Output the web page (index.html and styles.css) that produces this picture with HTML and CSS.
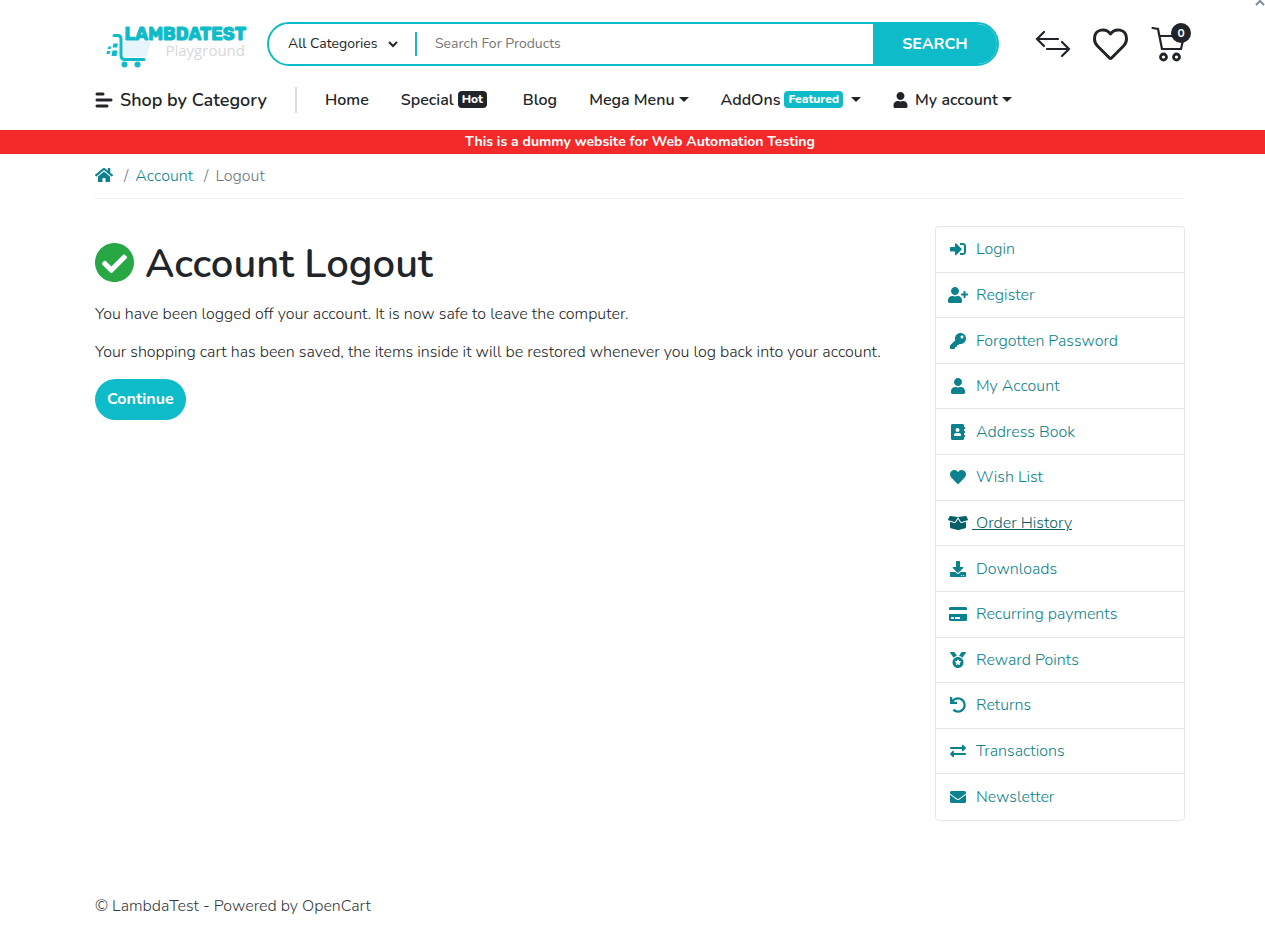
FILE: index.html
```html
<!DOCTYPE html>
<html lang="en">
<head>
<meta charset="utf-8">
<meta name="viewport" content="width=device-width, initial-scale=1">
<title>Account Logout</title>
<link rel="stylesheet" href="styles.css">
</head>
<body>
<button class="dismiss" type="button" aria-label="Close"><svg viewBox="0 0 12 12" fill="none" stroke="currentColor" stroke-width="2"><path d="M2 10L6 6L10 10"/></svg></button>
<header class="container">
  <div class="top">
    <a class="logo" href="#" aria-label="LambdaTest Playground">
      <svg viewBox="0 0 142 48">
        <path d="M19 21H43Q45 21 44.500 23L41 35Q40.500 37 38 37H17V21Z" fill="#e6f4fc"/>
        <path d="M8 15.500H12Q15 15.500 15 19V35Q15 39.500 19 39.500H38" fill="none" stroke="#0ebbc8" stroke-width="3" stroke-linecap="round"/>
        <g fill="#0ebbc8"><circle cx="18.500" cy="44.500" r="3"/><circle cx="31.500" cy="44.500" r="3"/>
        <path d="M7.500 23.500h4.500l-1 4h-4.500zM2.500 26.500h3l-1 2.500h-3zM1 31h3.500l-1 3h-3zM6.500 30.500h5l-1 5.500h-5z"/></g>
        <text class="logo-name" x="140" y="20" text-anchor="end">LAMBDATEST</text>
        <text class="logo-sub" x="139" y="36" text-anchor="end">Playground</text>
      </svg>
    </a>
    <form class="search">
      <select class="category" aria-label="Category"><option>All Categories</option></select>
      <svg class="chevron" viewBox="0 0 10 8" fill="none" stroke="currentColor" stroke-width="2"><path d="M1 2L5 6L9 2"/></svg>
      <input class="query" type="text" placeholder="Search For Products" aria-label="Search For Products">
      <button class="submit" type="submit">SEARCH</button>
    </form>
    <div class="tools">
      <a href="#" aria-label="Compare"><svg class="tool-icon" viewBox="0 0 36 36" fill="none" stroke="currentColor" stroke-width="2.200" stroke-linecap="round"><path d="M2 13H23M9 6L2 13L9 20M12 23H34M27 16L34 23L27 30"/></svg></a>
      <a href="#" aria-label="Wish list"><svg class="tool-icon" viewBox="0 0 36 36" fill="none" stroke="currentColor" stroke-width="3" stroke-linejoin="round"><path d="M17.500 8C13.500 2 1.500 2 1.500 13C1.500 16 2.500 18 4.500 20L16.500 32Q17.500 33 18.500 32L30.500 20C32.500 18 33.500 16 33.500 13C33.500 2 21.500 2 17.500 8Z"/></svg></a>
      <a class="cart" href="#" aria-label="Cart"><svg class="tool-icon" viewBox="0 0 36 36" fill="none" stroke="currentColor" stroke-width="2.200" stroke-linecap="round"><path d="M1.500 2L7 3L11 23H30L33 10H9"/><g stroke-width="2.800"><circle cx="12.500" cy="31" r="3"/><circle cx="25.500" cy="31" r="3"/></g></svg><span class="count">0</span></a>
    </div>
  </div>
  <nav class="menu">
    <a class="shop" href="#"><svg class="bars" viewBox="0 0 18 18" stroke="currentColor" stroke-width="3" stroke-linecap="round"><path d="M2 3H8M2 9H16M2 15H12"/></svg>Shop by Category</a>
    <a href="#">Home</a>
    <a href="#">Special<span class="badge dark">Hot</span></a>
    <a href="#">Blog</a>
    <a href="#">Mega Menu<i class="caret"></i></a>
    <a href="#">AddOns<span class="badge">Featured</span><i class="caret"></i></a>
    <a href="#"><svg class="person" viewBox="0 0 448 512" fill="currentColor"><path d="M224 256c70.7 0 128-57.3 128-128S294.7 0 224 0 96 57.3 96 128s57.3 128 128 128zm89.6 32h-16.7c-22.2 10.2-46.9 16-72.9 16s-50.6-5.8-72.9-16h-16.7C60.2 288 0 348.2 0 422.4V464c0 26.5 21.5 48 48 48h352c26.5 0 48-21.5 48-48v-41.6c0-74.2-60.2-134.4-134.4-134.4z"/></svg>My account<i class="caret"></i></a>
  </nav>
</header>
<p class="notice">This is a dummy website for Web Automation Testing</p>
<main class="container">
  <ol class="crumbs">
    <li><a href="#" aria-label="Home"><svg class="home" viewBox="0 0 576 512" fill="currentColor"><path d="M280.37 148.26L96 300.11V464a16 16 0 0 0 16 16l112.06-.29a16 16 0 0 0 15.92-16V368a16 16 0 0 1 16-16h64a16 16 0 0 1 16 16v95.64a16 16 0 0 0 16 16.05L464 480a16 16 0 0 0 16-16V300L295.67 148.26a12.19 12.19 0 0 0-15.3 0zM571.6 251.47L488 182.56V44.05a12 12 0 0 0-12-12h-56a12 12 0 0 0-12 12v72.61L318.47 43a48 48 0 0 0-61 0L4.34 251.47a12 12 0 0 0-1.6 16.9l25.5 31A12 12 0 0 0 45.15 301l235.22-193.74a12.19 12.19 0 0 1 15.3 0L530.9 301a12 12 0 0 0 16.9-1.6l25.5-31a12 12 0 0 0-1.7-16.93z"/></svg></a></li>
    <li><a href="#">Account</a></li>
    <li>Logout</li>
  </ol>
  <div class="columns">
    <section class="content">
      <h1><svg class="check" viewBox="8 8 496 496" fill="currentColor"><path d="M504 256c0 136.967-111.033 248-248 248S8 392.967 8 256 119.033 8 256 8s248 111.033 248 248zM227.314 387.314l184-184c6.248-6.248 6.248-16.379 0-22.627l-22.627-22.627c-6.248-6.249-16.379-6.249-22.628 0L216 308.118l-70.059-70.059c-6.248-6.248-16.379-6.248-22.628 0l-22.627 22.627c-6.248 6.248-6.248 16.379 0 22.627l104 104c6.249 6.249 16.379 6.249 22.628.001z"/></svg>Account Logout</h1>
      <p>You have been logged off your account. It is now safe to leave the computer.</p>
      <p>Your shopping cart has been saved, the items inside it will be restored whenever you log back into your account.</p>
      <a class="continue" href="#">Continue</a>
    </section>
    <aside class="list">
      <a href="#"><svg viewBox="0 0 512 512"><path d="M416 448h-84c-6.6 0-12-5.4-12-12v-40c0-6.6 5.4-12 12-12h84c17.7 0 32-14.3 32-32V160c0-17.700-14.300-32-32-32h-84c-6.600 0-12-5.400-12-12V76c0-6.600 5.400-12 12-12h84c53 0 96 43 96 96v192c0 53-43 96-96 96zm-47-201L201 79c-15-15-41-4.500-41 17v96H24c-13.300 0-24 10.700-24 24v96c0 13.300 10.700 24 24 24h136v96c0 21.500 26 32 41 17l168-168c9.300-9.400 9.300-24.600 0-34z"/></svg><span>Login</span></a>
      <a href="#"><svg viewBox="0 0 640 512"><path d="M624 208h-64v-64c0-8.800-7.200-16-16-16h-32c-8.800 0-16 7.200-16 16v64h-64c-8.800 0-16 7.200-16 16v32c0 8.800 7.200 16 16 16h64v64c0 8.800 7.200 16 16 16h32c8.800 0 16-7.200 16-16v-64h64c8.800 0 16-7.200 16-16v-32c0-8.800-7.200-16-16-16zM224 256c70.700 0 128-57.300 128-128S294.700 0 224 0 96 57.300 96 128s57.300 128 128 128zm89.600 32h-16.700c-22.200 10.200-46.900 16-72.900 16s-50.600-5.800-72.900-16h-16.700C60.200 288 0 348.200 0 422.400V464c0 26.500 21.500 48 48 48h352c26.500 0 48-21.500 48-48v-41.600c0-74.200-60.200-134.400-134.400-134.400z"/></svg><span>Register</span></a>
      <a href="#"><svg viewBox="0 0 512 512"><path d="M512 176.001C512 273.203 433.202 352 336 352c-11.220 0-22.190-1.062-32.827-3.069l-24.012 27.014A23.999 23.999 0 0 1 261.223 384H224v40c0 13.255-10.745 24-24 24h-40v40c0 13.255-10.745 24-24 24H24c-13.255 0-24-10.745-24-24v-78.059c0-6.365 2.529-12.470 7.029-16.971l161.802-161.802C163.108 213.814 160 195.271 160 176 160 78.798 238.797.001 335.999 0 433.488-.001 512 78.511 512 176.001zM336 128c0 26.510 21.490 48 48 48s48-21.490 48-48-21.490-48-48-48-48 21.490-48 48z"/></svg><span>Forgotten Password</span></a>
      <a href="#"><svg viewBox="0 0 448 512"><path d="M224 256c70.700 0 128-57.300 128-128S294.700 0 224 0 96 57.300 96 128s57.300 128 128 128zm89.600 32h-16.700c-22.200 10.200-46.900 16-72.900 16s-50.600-5.800-72.900-16h-16.700C60.200 288 0 348.200 0 422.400V464c0 26.500 21.500 48 48 48h352c26.500 0 48-21.500 48-48v-41.600c0-74.200-60.200-134.400-134.400-134.400z"/></svg><span>My Account</span></a>
      <a href="#"><svg viewBox="0 0 448 512"><path d="M436 160c6.600 0 12-5.400 12-12v-40c0-6.600-5.400-12-12-12h-20V48c0-26.500-21.500-48-48-48H48C21.500 0 0 21.500 0 48v416c0 26.500 21.500 48 48 48h320c26.500 0 48-21.500 48-48v-48h20c6.600 0 12-5.400 12-12v-40c0-6.600-5.400-12-12-12h-20v-64h20c6.600 0 12-5.400 12-12v-40c0-6.600-5.400-12-12-12h-20v-64h20zm-228-32c35.300 0 64 28.700 64 64s-28.700 64-64 64-64-28.700-64-64 28.700-64 64-64zm112 236.800c0 10.600-10 19.200-22.400 19.200H118.400C106 384 96 375.400 96 364.800v-19.200c0-31.800 30.100-57.600 67.200-57.600h5c12.300 5.100 25.700 8 39.800 8s27.600-2.900 39.800-8h5c37.100 0 67.200 25.800 67.200 57.600v19.200z"/></svg><span>Address Book</span></a>
      <a href="#"><svg viewBox="0 0 512 512"><path d="M462.300 62.600C407.500 15.900 326 24.300 275.700 76.200L256 96.500l-19.700-20.300C186.100 24.300 104.500 15.900 49.700 62.600c-62.800 53.600-66.100 149.800-9.900 207.900l193.500 199.800c12.500 12.900 32.800 12.900 45.300 0l193.500-199.800c56.300-58.100 53-154.300-9.800-207.900z"/></svg><span>Wish List</span></a>
      <a class="active" href="#"><svg viewBox="0 0 640 512"><path d="M425.700 256c-16.900 0-32.800-9-41.400-23.400L320 126l-64.200 106.600c-8.700 14.500-24.600 23.500-41.500 23.500-4.500 0-9-.6-13.300-1.900L64 215v178c0 14.700 10 27.500 24.200 31l216.200 54.100c10.200 2.500 20.900 2.500 31 0L551.800 424c14.200-3.600 24.200-16.400 24.200-31V215l-137 39.100c-4.300 1.300-8.800 1.900-13.300 1.900zm212.600-112.200L586.800 41c-3.100-6.200-9.800-9.800-16.700-8.900L320 64l91.700 152.100c3.800 6.300 11.400 9.300 18.500 7.300l197.900-56.500c9.900-2.900 14.700-13.900 10.200-23.100zM53.200 41L1.700 143.800c-4.600 9.200.3 20.200 10.100 23l197.900 56.500c7.100 2 14.700-1 18.500-7.300L320 64 69.800 32.100c-6.900-.8-13.500 2.700-16.600 8.900z"/></svg><span>&nbsp;Order History</span></a>
      <a href="#"><svg viewBox="0 0 512 512"><path d="M216 0h80c13.300 0 24 10.700 24 24v168h87.700c17.800 0 26.700 21.500 14.100 34.100L269.700 378.300c-7.500 7.500-19.800 7.500-27.300 0L90.100 226.100c-12.600-12.600-3.700-34.100 14.100-34.100H192V24c0-13.300 10.700-24 24-24zm296 376v112c0 13.300-10.700 24-24 24H24c-13.300 0-24-10.700-24-24V376c0-13.300 10.700-24 24-24h146.700l49 49c20.100 20.100 52.500 20.100 72.600 0l49-49H488c13.300 0 24 10.700 24 24zm-124 88c0-11-9-20-20-20s-20 9-20 20 9 20 20 20 20-9 20-20zm64 0c0-11-9-20-20-20s-20 9-20 20 9 20 20 20 20-9 20-20z"/></svg><span>Downloads</span></a>
      <a href="#"><svg viewBox="0 0 576 512"><path d="M0 432c0 26.500 21.500 48 48 48h480c26.500 0 48-21.500 48-48V256H0v176zm192-68c0-6.600 5.400-12 12-12h136c6.600 0 12 5.400 12 12v40c0 6.600-5.400 12-12 12H204c-6.600 0-12-5.400-12-12v-40zm-128 0c0-6.600 5.400-12 12-12h72c6.600 0 12 5.400 12 12v40c0 6.600-5.400 12-12 12H76c-6.600 0-12-5.400-12-12v-40zM576 80v48H0V80c0-26.500 21.500-48 48-48h480c26.500 0 48 21.500 48 48z"/></svg><span>Recurring payments</span></a>
      <a href="#"><svg viewBox="0 0 512 512"><path d="M223.750 130.750L154.620 15.540A31.997 31.997 0 0 0 127.180 0H16.030C3.080 0-4.500 14.570 2.920 25.180l111.270 158.960c29.720-27.770 67.520-46.830 109.560-53.390zM495.970 0H384.820c-11.240 0-21.660 5.900-27.440 15.540l-69.130 115.210c42.040 6.560 79.840 25.620 109.560 53.380L509.080 25.180C516.500 14.570 508.920 0 495.970 0zM256 160c-97.200 0-176 78.800-176 176s78.800 176 176 176 176-78.800 176-176-78.800-176-176-176zm92.520 157.260l-37.930 36.960 8.970 52.220c1.600 9.360-8.260 16.510-16.650 12.090L256 393.880l-46.900 24.650c-8.400 4.450-18.250-2.740-16.650-12.090l8.970-52.220-37.930-36.960c-6.820-6.640-3.050-18.230 6.350-19.590l52.430-7.640 23.430-47.520c2.110-4.280 6.190-6.390 10.280-6.390 4.110 0 8.220 2.140 10.330 6.390l23.430 47.520 52.430 7.640c9.400 1.360 13.170 12.950 6.350 19.590z"/></svg><span>Reward Points</span></a>
      <a href="#"><svg viewBox="0 0 512 512"><path d="M212.333 224.333H12c-6.627 0-12-5.373-12-12V12C0 5.373 5.373 0 12 0h48c6.627 0 12 5.373 12 12v78.112C117.773 39.279 184.260 7.470 258.175 8.007c136.906.994 246.448 111.623 246.157 248.532C504.041 393.258 393.120 504 256.333 504c-64.089 0-122.496-24.313-166.510-64.215-5.099-4.622-5.334-12.554-.467-17.420l33.967-33.967c4.474-4.474 11.662-4.717 16.401-.525C170.760 415.336 211.580 432 256.333 432c97.268 0 176-78.716 176-176 0-97.267-78.716-176-176-176-58.496 0-110.280 28.476-142.274 72.333h98.274c6.627 0 12 5.373 12 12v48c0 6.627-5.373 12-12 12z"/></svg><span>Returns</span></a>
      <a href="#"><svg viewBox="0 0 512 512"><path d="M0 168v-16c0-13.255 10.745-24 24-24h360V80c0-21.367 25.899-32.042 40.971-16.971l80 80c9.372 9.373 9.372 24.569 0 33.941l-80 80C409.956 271.982 384 261.456 384 240v-48H24c-13.255 0-24-10.745-24-24zm488 152H128v-48c0-21.314-25.862-32.080-40.971-16.971l-80 80c-9.372 9.373-9.372 24.569 0 33.941l80 80C102.057 463.997 128 453.437 128 432v-48h360c13.255 0 24-10.745 24-24v-16c0-13.255-10.745-24-24-24z"/></svg><span>Transactions</span></a>
      <a href="#"><svg viewBox="0 0 512 512"><path d="M502.300 190.800c3.900-3.100 9.700-.2 9.700 4.700V400c0 26.500-21.500 48-48 48H48c-26.500 0-48-21.500-48-48V195.600c0-5 5.700-7.800 9.700-4.700 22.400 17.400 52.100 39.500 154.100 113.600 21.100 15.400 56.700 47.800 92.200 47.600 35.700.3 72-32.800 92.300-47.600 102-74.100 131.600-96.300 154-113.700zM256 320c23.200.4 56.600-29.200 73.400-41.400 132.700-96.300 142.800-104.700 173.400-128.700 5.800-4.500 9.200-11.500 9.200-18.900v-19c0-26.500-21.500-48-48-48H48c-26.500 0-48 21.500-48 48v19c0 7.400 3.400 14.300 9.200 18.900 30.600 23.900 40.700 32.400 173.400 128.700 16.800 12.200 50.200 41.800 73.400 41.400z"/></svg><span>Newsletter</span></a>
    </aside>
  </div>
</main>
<footer class="container">© LambdaTest - Powered by OpenCart</footer>
</body>
</html>
```
FILE: styles.css
```css
* { box-sizing: border-box; }
body {
  margin: 0;
  font: 300 16px/24px Nunito, "Open Sans", sans-serif;
  color: #212529;
  background: #fff;
}
a { color: #0b828d; text-decoration: none; }
svg { display: block; flex: none; }
p { margin: 0; }
.container { padding: 0 80px 0 95px; }

.dismiss {
  position: absolute;
  top: -5px;
  right: -1px;
  width: 12px;
  height: 12px;
  padding: 0;
  border: 0;
  background: none;
  color: #7b8a94;
}

.top { display: flex; align-items: center; padding-top: 20px; }
.logo { margin: 0 19px 0 11px; }
.logo svg { width: 142px; height: 48px; overflow: visible; }
.logo-name { font: 700 18px Rubik, Roboto, sans-serif; fill: #0ebbc8; stroke: #0ebbc8; stroke-width: 1px; }
.logo-sub { font: 400 15px "Open Sans", sans-serif; fill: #d8d8d8; }

.search {
  display: flex;
  align-items: center;
  flex: 1;
  height: 44px;
  overflow: hidden;
  border: 2px solid #0ebbc8;
  border-radius: 22px;
}
.category {
  appearance: none;
  width: 148px;
  height: 24px;
  padding: 0 0 0 19px;
  border: 0;
  border-right: 2px solid #0ebbc8;
  background: none;
  color: #212529;
  font: 400 14px/24px Nunito, "Open Sans", sans-serif;
}
.chevron { width: 10px; height: 8px; margin-left: -29px; pointer-events: none; }
.query {
  flex: 1;
  min-width: 0;
  margin-left: 37px;
  padding: 0;
  border: 0;
  outline: 0;
  font: 400 14px/24px Nunito, "Open Sans", sans-serif;
}
.query::placeholder { color: #757575; opacity: 1; }
.submit {
  align-self: stretch;
  width: 124px;
  padding: 0;
  border: 0;
  background: #0ebbc8;
  color: #fff;
  font: 700 16px/24px Nunito, "Open Sans", sans-serif;
}
.tools { display: flex; gap: 22px; margin: 0 -2px 0 36px; }
.tools a { position: relative; color: #212529; }
.tool-icon { width: 36px; height: 36px; }
.count {
  position: absolute;
  top: -3px;
  right: -4px;
  width: 20px;
  border-radius: 10px;
  background: #212529;
  color: #fff;
  font-size: 12px;
  font-weight: 700;
  line-height: 20px;
  text-align: center;
}

.menu {
  display: flex;
  align-items: center;
  gap: 32px;
  height: 62px;
  padding-top: 1px;
  white-space: nowrap;
  font-weight: 600;
}
.menu a { display: flex; align-items: center; color: #212529; }
.menu .shop {
  gap: 7px;
  width: 202px;
  margin-right: -4px;
  border-right: 2px solid #ddd;
  font-size: 18px;
  line-height: 26px;
}
.bars { width: 18px; height: 18px; }
.badge {
  margin: 0 4px;
  padding: 0 4px;
  border-radius: 4px;
  background: #0ebbc8;
  color: #fff;
  font-size: 12px;
  font-weight: 800;
  line-height: 17px;
}
.badge.dark { background: #212529; }
.caret {
  margin-left: 4px;
  border: 5px solid transparent;
  border-top-color: #212529;
  border-bottom: 0;
}
.person { width: 15px; height: 16px; margin-right: 7px; }

.notice {
  padding-left: 15px;
  background: #f42a2a;
  color: #fff;
  font-size: 14px;
  font-weight: 700;
  text-align: center;
}

.crumbs {
  display: flex;
  margin: 0 0 27px;
  padding: 10px 0;
  border-bottom: 1px solid #eee;
  list-style: none;
  color: #6c757d;
}
.crumbs li { display: flex; align-items: center; }
.crumbs li + li::before { content: "/"; margin: 0 7px 0 11px; }
.home { width: 18px; height: 16px; margin-bottom: 2px; }

.columns { display: grid; grid-template-columns: 1fr 250px; gap: 40px; }
h1 {
  display: flex;
  align-items: center;
  gap: 11px;
  margin: 14px 0;
  font-size: 40px;
  font-weight: 600;
  line-height: 48px;
}
.check { width: 39px; height: 39px; margin-bottom: 4px; color: #28a745; }
.content p { margin-bottom: 14px; }
.continue {
  display: inline-block;
  margin-top: 1px;
  padding: 8px 12px;
  border-radius: 21px;
  background: #0ebbc8;
  color: #fff;
  font-weight: 700;
  line-height: 25px;
}
.list {
  display: grid;
  grid-auto-rows: 1fr;
  min-height: 595px;
  border: 1px solid #e6e6e6;
  border-radius: 4px;
}
.list a {
  display: grid;
  grid-template-columns: 20px auto;
  gap: 8px;
  align-items: center;
  justify-content: start;
  padding: 0 12px;
}
.list a:not(:last-child) { border-bottom: 1px solid #e6e6e6; }
.list svg { height: 16px; justify-self: center; fill: currentColor; }
.list .active { gap: 4px; color: #065e66; }
.active span { text-decoration: underline; }
footer { margin: 73px 0 28px; color: #343a40; }
```
